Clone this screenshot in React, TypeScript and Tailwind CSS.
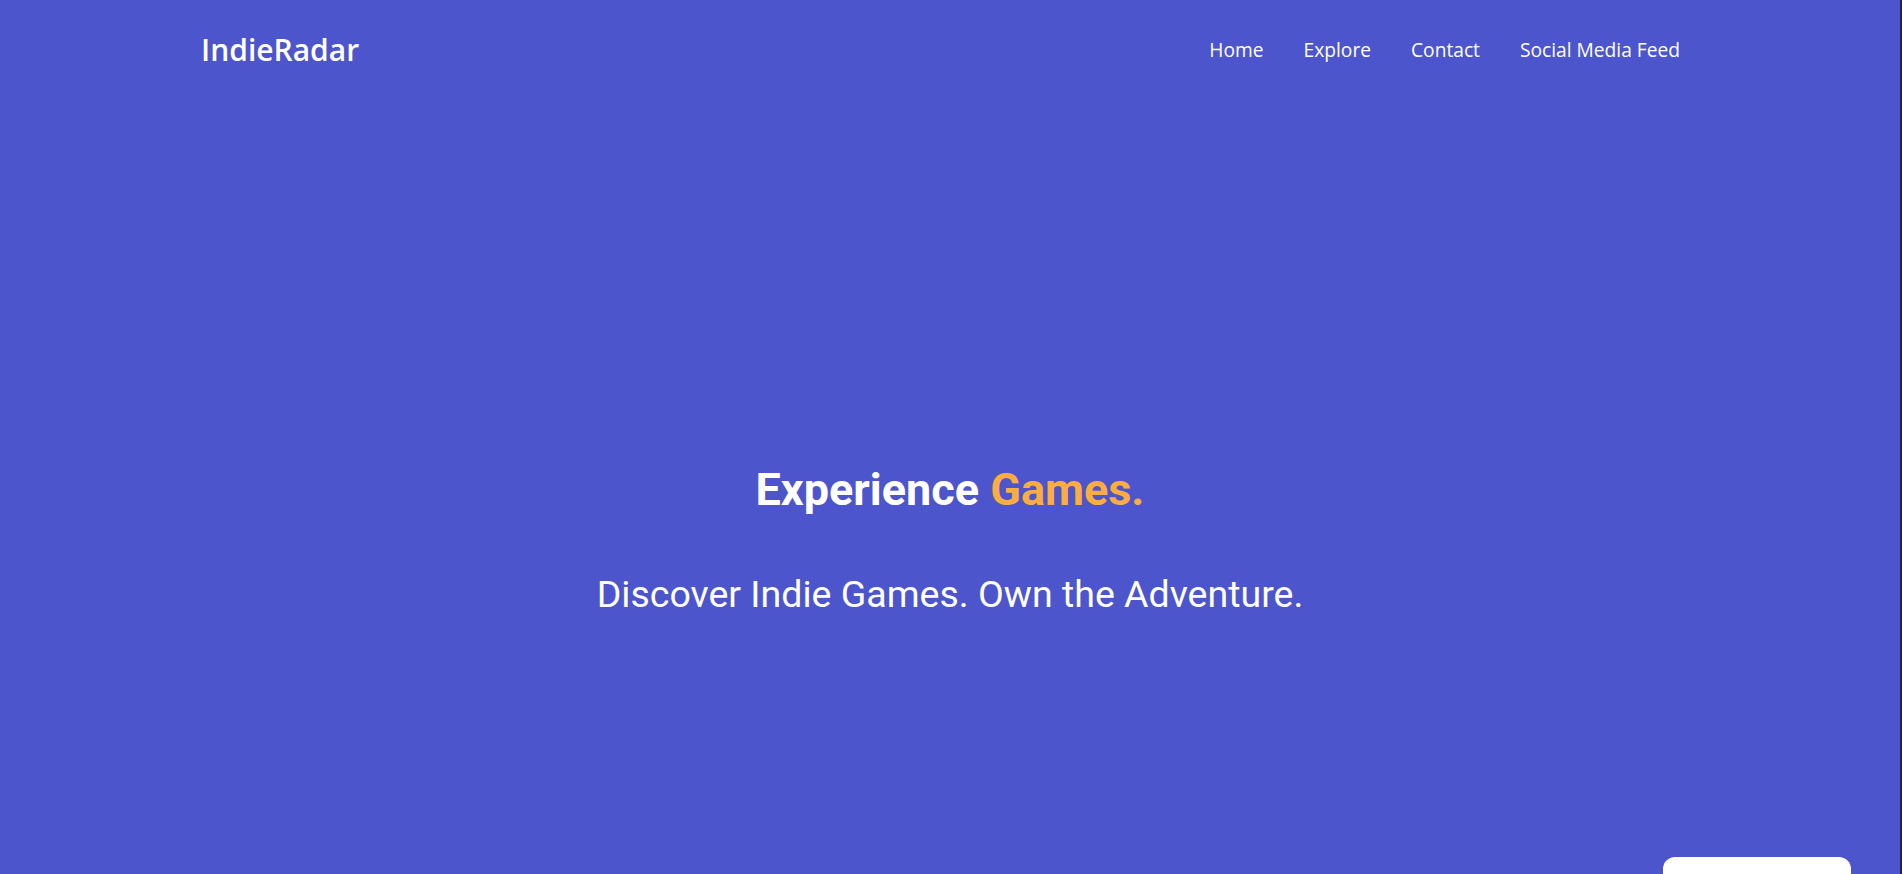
import React from "react";

export default function App() {
  const navFont = { fontFamily: '"Open Sans", "Noto Sans", sans-serif' };
  return (
    <div className="relative h-[874px] w-full overflow-hidden bg-[#4c55cc] border-r-2 border-[#23244a]">
      <header className="flex h-[100px] items-center justify-between pl-[201px] pr-[220px]">
        <div
          className="text-[30px] font-semibold leading-none text-white"
          style={navFont}
        >
          IndieRadar
        </div>
        <nav className="flex items-center gap-[40px] text-[19.2px] text-white" style={navFont}>
          <a href="#">Home</a>
          <a href="#">Explore</a>
          <a href="#">Contact</a>
          <a href="#">Social Media Feed</a>
        </nav>
      </header>
      <main
        className="flex flex-col items-center pt-[364px] text-white"
        style={{ fontFamily: "Roboto, sans-serif" }}
      >
        <h1 className="text-[45px] font-bold leading-[52px]">
          Experience <span className="text-[#fbad42]">Games.</span>
        </h1>
        <p className="mt-[56px] text-[37.5px] font-normal leading-[44px]">
          Discover Indie Games. Own the Adventure.
        </p>
      </main>
      <div className="absolute left-[1663px] top-[857px] h-[40px] w-[188px] rounded-[12px] bg-white" />
    </div>
  );
}
